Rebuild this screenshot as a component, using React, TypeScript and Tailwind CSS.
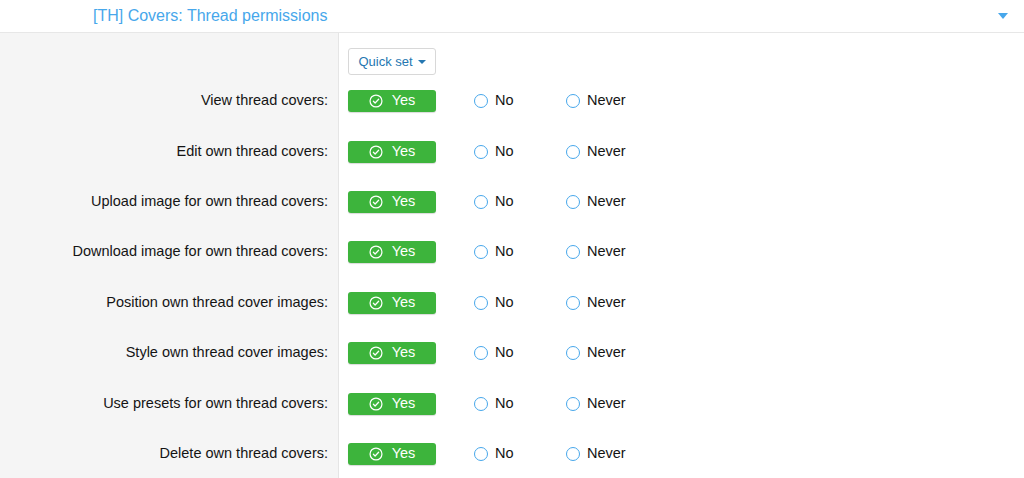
import React from 'react';

const rows = [
  'View thread covers:',
  'Edit own thread covers:',
  'Upload image for own thread covers:',
  'Download image for own thread covers:',
  'Position own thread cover images:',
  'Style own thread cover images:',
  'Use presets for own thread covers:',
  'Delete own thread covers:',
];

const CheckCircle = () => (
  <svg width="14" height="14" viewBox="0 0 16 16" fill="none" stroke="currentColor" strokeWidth="1.4">
    <circle cx="8" cy="8" r="6.8" />
    <path d="M5 8.3l2 2 4-4.3" strokeLinecap="round" strokeLinejoin="round" />
  </svg>
);

const Radio = ({ label }: { label: string }) => (
  <label className="flex items-center gap-[7px] text-[14.5px] text-[#141414]">
    <span className="w-[14px] h-[14px] rounded-full border-[1.5px] border-[#47a7eb] bg-white" />
    {label}
  </label>
);

export default function App() {
  return (
    <div className="w-[1024px] h-[478px] overflow-hidden bg-white font-['Liberation_Sans',Arial,sans-serif]">
      <div className="h-[33px] flex items-center justify-between border-b border-[#e7e7e7] pl-[93px] pr-[16px]">
        <span className="text-[16px] text-[#47a7eb]">[TH] Covers: Thread permissions</span>
        <span className="w-0 h-0 border-l-[5px] border-r-[5px] border-t-[6px] border-l-transparent border-r-transparent border-t-[#47a7eb]" />
      </div>
      <div className="flex">
        <div className="w-[339px] shrink-0 bg-[#f5f5f5] border-r border-[#e5e5e5] h-[445px]" />
        <div className="-ml-[339px] w-full">
          <div className="h-[43px] flex items-end pl-[348px] pb-[1px]">
            <button className="w-[88px] h-[27px] bg-white border border-[#d8d8d8] rounded-[3px] text-[13px] text-[#2577b1] flex items-center justify-center gap-[5px]">
              Quick set
              <span className="w-0 h-0 border-l-[4px] border-r-[4px] border-t-[4px] border-l-transparent border-r-transparent border-t-[#2577b1]" />
            </button>
          </div>
          {rows.map((label) => (
            <div key={label} className="h-[50.4px] flex items-center">
              <div className="w-[339px] shrink-0 pr-[11px] text-right text-[14.5px] text-[#141414]">{label}</div>
              <div className="flex items-center pl-[9px]">
                <div className="w-[88px] h-[22px] rounded-[3px] bg-[#3db43c] text-white text-[14.5px] flex items-center justify-center gap-[9px] shadow-[0_1px_1px_rgba(0,0,0,0.15)]">
                  <CheckCircle />
                  Yes
                </div>
                <div className="ml-[38px] w-[92px]">
                  <Radio label="No" />
                </div>
                <Radio label="Never" />
              </div>
            </div>
          ))}
        </div>
      </div>
    </div>
  );
}
